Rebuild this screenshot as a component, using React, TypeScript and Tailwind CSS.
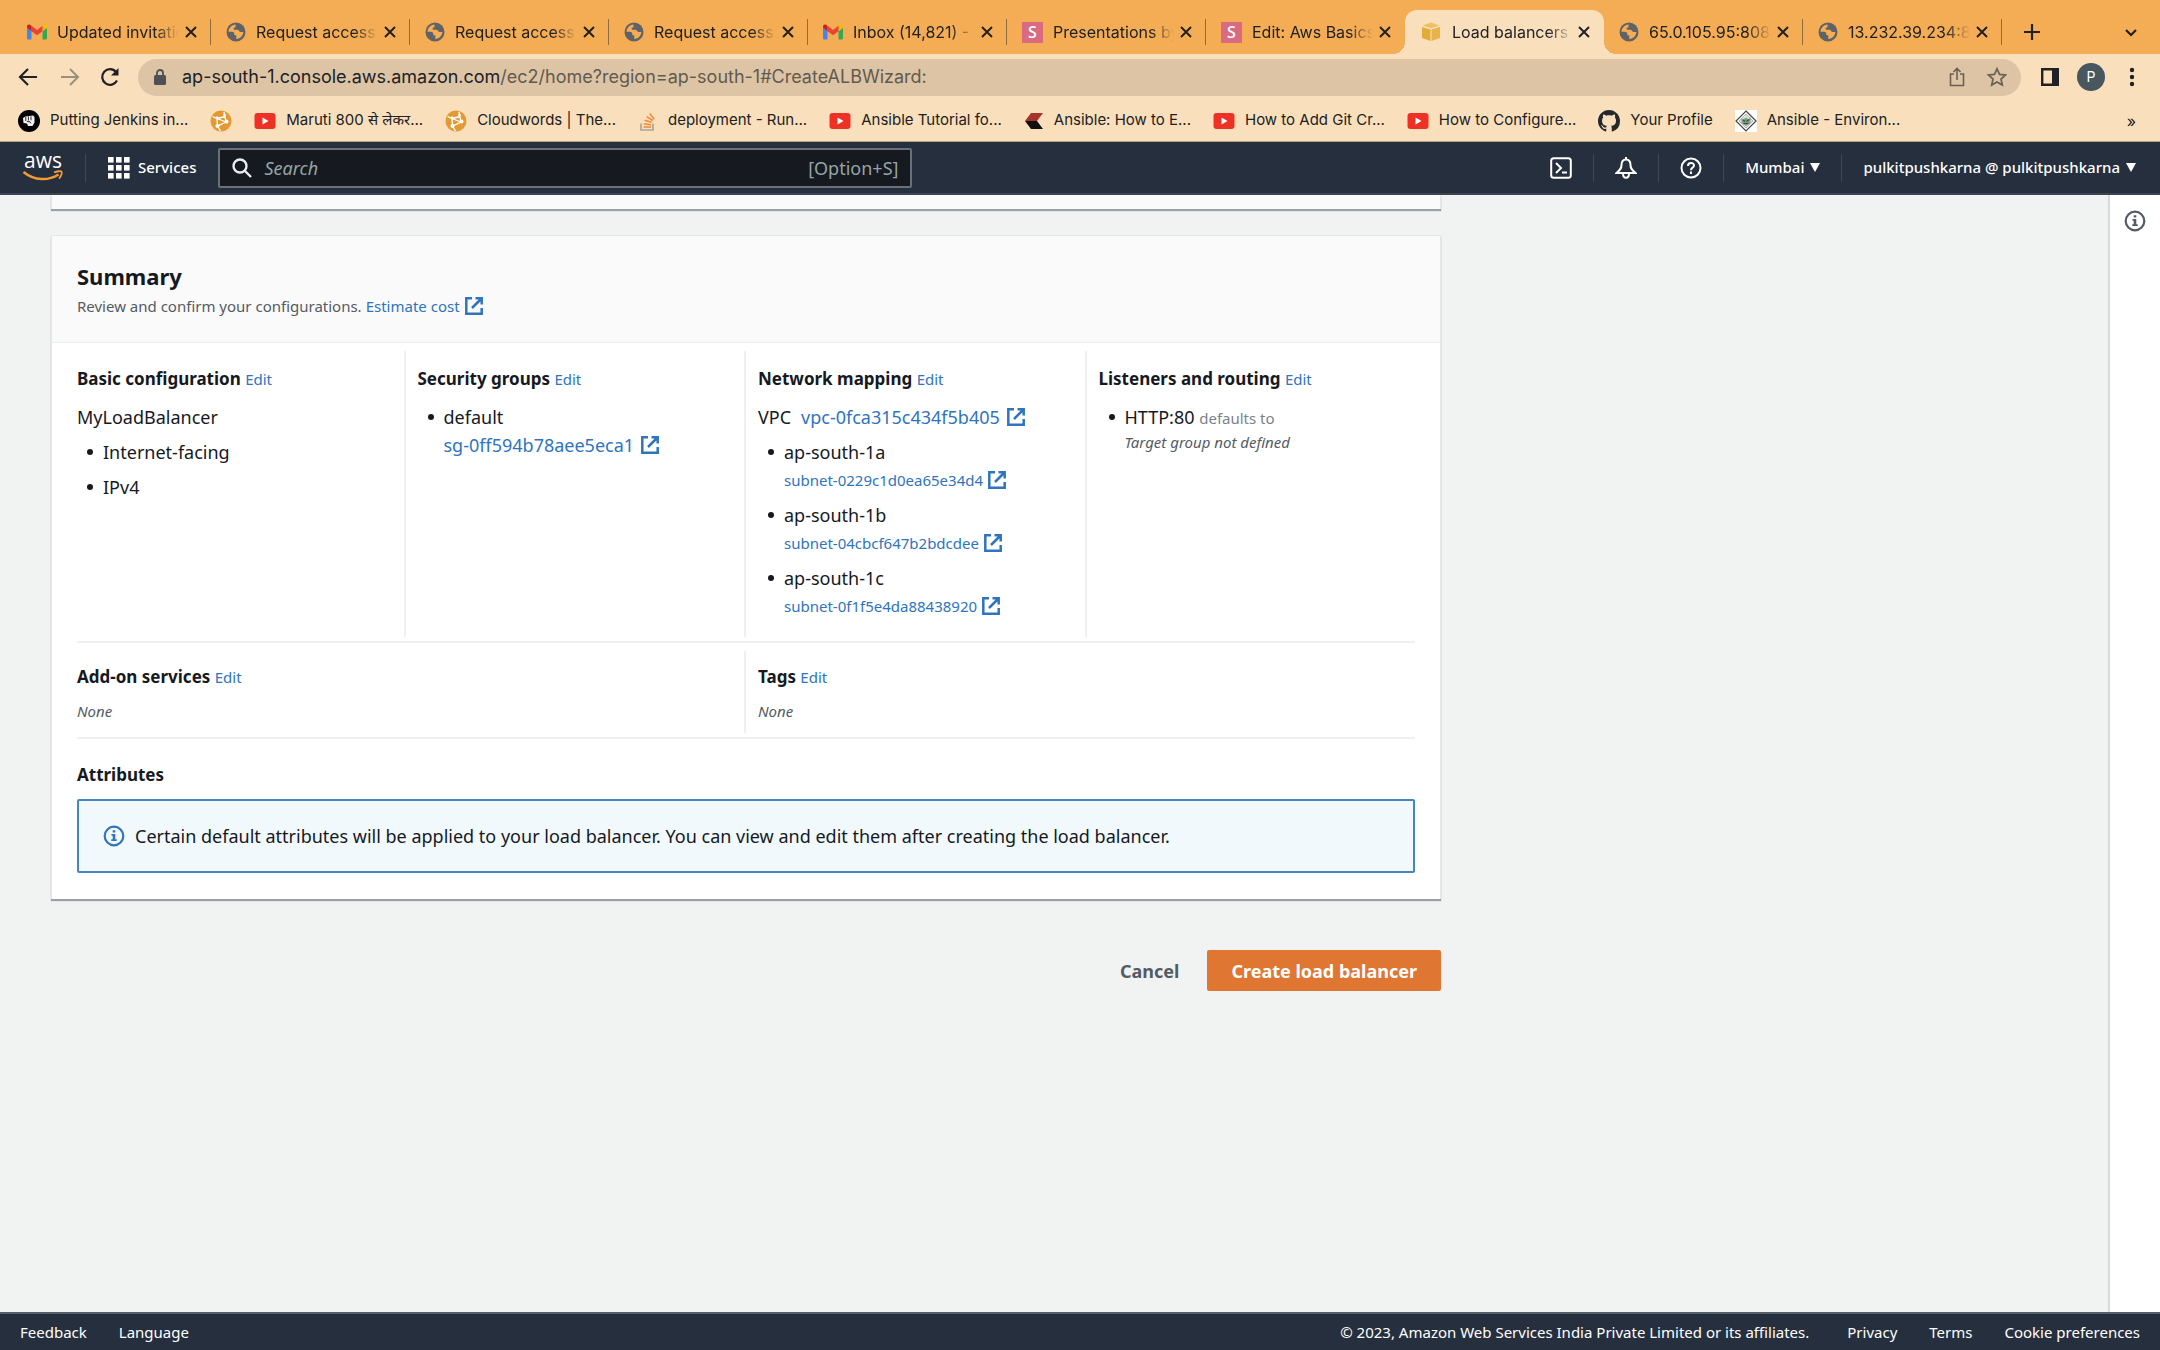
import React from 'react';

interface TabInfo {
  icon: 'gmail' | 'globe' | 'slides' | 'aws';
  title: string;
  active?: boolean;
}

interface BookmarkInfo {
  icon: React.ReactNode;
  title: string;
}

const GmailIcon = () => (
  <svg viewBox="0 0 24 18" className="h-[18px] w-5 shrink-0">
    <path d="M0 3v13.4C0 17.300.7 18 1.600 18H5.400V8L0 4z" fill="#4285f4" />
    <path d="M24 3v13.400c0 .9-.7 1.600-1.600 1.600H18.600V8L24 4z" fill="#34a853" />
    <path d="M18.600 1.600V8L24 4V2.400C24 .3 21.700-.8 20 .5z" fill="#fbbc04" />
    <path d="M5.400 8V1.600L12 6.600l6.600-5V8L12 13z" fill="#ea4335" />
    <path d="M0 2.400V4l5.400 4V1.600L4 .5C2.300-.8 0 .3 0 2.400z" fill="#c5221f" />
  </svg>
);

const GlobeIcon = () => (
  <svg viewBox="0 0 20 20" className="h-5 w-5 shrink-0">
    <circle cx="10" cy="10" r="9.500" fill="#5f6368" />
    <path d="M9.500 2.500C5.500 3 2.700 6 2.500 9.700l3.200.1c2 0 2.600 1 2.600 2.200v1.200h2v3.900c3.900-.4 6.900-3.400 7.100-7.100h-2.900c-1.600 0-1.600-2.200-3.200-2.200H7.800V5.600h1.700z" fill="#f4ad55" />
  </svg>
);

const SlidesIcon = () => (
  <span className="flex h-[21px] w-[21px] shrink-0 items-center justify-center bg-[#d96a80] font-['Open_Sans',sans-serif] text-base font-semibold text-white">
    S
  </span>
);

const CubeIcon = () => (
  <svg viewBox="0 0 22 22" className="h-[22px] w-[22px] shrink-0">
    <path d="M2 6l8.500 2.500V20L2 17z" fill="#e3ab3c" />
    <path d="M20 6l-8.500 2.500V20L20 17z" fill="#e8b347" />
    <path d="M11 1.500l8.500 3L11 7.300l-8.500-2.800z" fill="#edc063" />
  </svg>
);

const YoutubeIcon = () => (
  <svg viewBox="0 0 22 16" className="h-4 w-[22px] shrink-0">
    <rect x=".5" width="21" height="16" rx="3" fill="#ee3124" />
    <path d="M8.500 4.500v7l6-3.500z" fill="#fff" />
  </svg>
);

const CloudwordsIcon = () => (
  <svg viewBox="0 0 22 22" className="h-[22px] w-[22px] shrink-0">
    <circle cx="11" cy="11" r="10.500" fill="#e39a35" />
    <path d="M2.500 6.500L7 8.500 15.500 6.500M7 8.500l9 3.500-8.500 4L7 8.500M16 12l-2-10M7.500 16l3 5" stroke="#fff" strokeWidth="1.300" fill="none" />
    <g fill="#fff">
      <circle cx="7.500" cy="16" r="2" />
      <circle cx="16.500" cy="11.500" r="2" />
      <circle cx="7" cy="8" r="1.400" />
      <circle cx="14.500" cy="5" r="1.300" />
    </g>
  </svg>
);

const FistIcon = () => (
  <svg viewBox="0 0 22 22" className="h-[22px] w-[22px] shrink-0">
    <circle cx="11" cy="11" r="11" fill="#000" />
    <path d="M5 8l2.500-1.500L15 5.500l1.500 1.500v5.500L14.500 16H10l-1-2.500-3.500-.5z" fill="#f2f2f2" />
    <path d="M7.800 7v4M10.400 6.500v4M13 6.300v4M9 11.500l3 .3 1 1.500" stroke="#000" strokeWidth=".8" fill="none" />
  </svg>
);

const StackIcon = () => (
  <svg viewBox="0 0 20 22" className="h-[22px] w-5 shrink-0">
    <path d="M3 13.500v6.500h12v-6.500" fill="none" stroke="#a9a6a0" strokeWidth="1.700" />
    <path d="M5.500 17h7.500M5.700 13.800l7.400.9M6.600 10.300l7 2M8.600 6.700l6.200 3.800M11.700 3.500l4.500 5.700" stroke="#ea8a3c" strokeWidth="1.500" fill="none" />
  </svg>
);

const ChevronMark = () => (
  <svg viewBox="0 0 20 18" className="h-[18px] w-5 shrink-0">
    <path d="M19 1H7L1 9h12z" fill="#a8322c" />
    <path d="M1 9h12l6 8H7z" fill="#111" />
  </svg>
);

const GithubIcon = () => (
  <svg viewBox="0 0 16 16" className="h-[22px] w-[22px] shrink-0" fill="#24292e">
    <path d="M8 0C3.580 0 0 3.580 0 8c0 3.540 2.290 6.530 5.470 7.590.4.070.55-.17.55-.38 0-.19-.01-.82-.01-1.490-2.010.37-2.530-.49-2.690-.94-.09-.23-.48-.94-.82-1.130-.28-.15-.68-.52-.01-.53.63-.01 1.080.58 1.230.82.72 1.210 1.870.87 2.330.66.070-.52.28-.87.51-1.070-1.780-.2-3.640-.89-3.640-3.950 0-.87.31-1.590.82-2.150-.08-.2-.36-1.020.08-2.120 0 0 .67-.21 2.200.82.64-.18 1.320-.27 2-.27s1.360.09 2 .27c1.530-1.040 2.200-.82 2.200-.82.44 1.100.16 1.920.08 2.120.51.56.82 1.270.82 2.150 0 3.070-1.870 3.750-3.650 3.950.29.25.54.73.54 1.480 0 1.070-.01 1.930-.01 2.200 0 .21.15.46.55.38A8.010 8.010 0 0 0 16 8c0-4.420-3.580-8-8-8z" />
  </svg>
);

const DiamondIcon = () => (
  <svg viewBox="0 0 22 22" className="h-[22px] w-[22px] shrink-0">
    <rect width="22" height="22" fill="#fff" />
    <path d="M11 1l10 10-10 10L1 11z" fill="#fff" stroke="#444" strokeWidth="1.200" />
    <path d="M11 4l7 7-7 7-7-7z" fill="#dfe3df" stroke="#888" strokeWidth=".6" />
    <path d="M6.500 8l2 1.200L11 7.500l2.500 1.700L15.500 7v6L11 16l-4.500-3z" fill="#7fa087" />
    <path d="M8 10l2 1.500M14 9.500l-2.500 2M8.500 13.500h5" stroke="#35513c" strokeWidth="1.200" />
  </svg>
);

const ExternalIcon = () => (
  <svg viewBox="0 0 20 20" className="inline-block h-5 w-5 shrink-0" fill="none" stroke="#2f74bd" strokeWidth="2.500">
    <path d="M8 2.300H2.300v15.400h15.400V12" />
    <path d="M11.500 2.300h6.200v6.200M17.500 2.500L8 12" />
  </svg>
);

const InfoIcon = ({ color }: { color: string }) => (
  <svg viewBox="0 0 22 22" className="h-[22px] w-[22px] shrink-0">
    <circle cx="11" cy="11" r="9.300" fill="none" stroke={color} strokeWidth="2.200" />
    <path d="M9.700 5.300h2.600v2.300H9.700zM8.500 9h3.800v5.200h1.400V16H8.300v-1.800h1.400v-3.400H8.500z" fill={color} />
  </svg>
);

const AwsLogo = () => (
  <svg viewBox="0 0 42 28" className="h-7 w-[42px]" role="img" aria-label="aws">
    <text x="20" y="14" textAnchor="middle" fontFamily="Open Sans, sans-serif" fontSize="21" fontWeight="500" fill="#fff">
      aws
    </text>
    <path d="M.5 18c11 9 25 9 35 2.500" fill="none" stroke="#f39b33" strokeWidth="2.500" />
    <path d="M31 18.500c3-1.500 7-1.600 7.600-.8s-.2 4.400-2.600 7" fill="none" stroke="#f39b33" strokeWidth="1.800" />
  </svg>
);

const tabs: TabInfo[] = [
  { icon: 'gmail', title: 'Updated invitation' },
  { icon: 'globe', title: 'Request access' },
  { icon: 'globe', title: 'Request access' },
  { icon: 'globe', title: 'Request access' },
  { icon: 'gmail', title: 'Inbox (14,821) - p' },
  { icon: 'slides', title: 'Presentations by' },
  { icon: 'slides', title: 'Edit: Aws Basics' },
  { icon: 'aws', title: 'Load balancers |', active: true },
  { icon: 'globe', title: '65.0.105.95:8080' },
  { icon: 'globe', title: '13.232.39.234:80' },
];

const bookmarks: BookmarkInfo[] = [
  { icon: <FistIcon />, title: 'Putting Jenkins in...' },
  { icon: <CloudwordsIcon />, title: '' },
  { icon: <YoutubeIcon />, title: 'Maruti 800 से लेकर...' },
  { icon: <CloudwordsIcon />, title: 'Cloudwords | The...' },
  { icon: <StackIcon />, title: 'deployment - Run...' },
  { icon: <YoutubeIcon />, title: 'Ansible Tutorial fo...' },
  { icon: <ChevronMark />, title: 'Ansible: How to E...' },
  { icon: <YoutubeIcon />, title: 'How to Add Git Cr...' },
  { icon: <YoutubeIcon />, title: 'How to Configure...' },
  { icon: <GithubIcon />, title: 'Your Profile' },
  { icon: <DiamondIcon />, title: 'Ansible - Environ...' },
];

const tabIcons = {
  gmail: <GmailIcon />,
  globe: <GlobeIcon />,
  slides: <SlidesIcon />,
  aws: <CubeIcon />,
};

const BrowserTab = ({ tab, divider }: { tab: TabInfo; divider: boolean }) => (
  <div
    className={`relative flex h-11 w-[199px] items-center pr-2 pl-[15px] ${tab.active ? 'rounded-t-xl bg-[#f9dfbb]' : ''}`}
  >
    {tabIcons[tab.icon]}
    <span className="ml-2.5 flex-1 overflow-hidden whitespace-nowrap text-base [mask-image:linear-gradient(to_right,#000_80%,transparent)]">
      {tab.title}
    </span>
    <button aria-label={`Close ${tab.title}`} className="p-1.5">
      <svg viewBox="0 0 12 12" className="h-3 w-3" stroke="#202124" strokeWidth="2">
        <path d="M1 1l10 10M11 1L1 11" />
      </svg>
    </button>
    {divider && <span className="absolute top-[9px] right-0 h-[26px] w-px bg-[#8f6c3f]" />}
    {tab.active && (
      <>
        <span className="absolute bottom-0 -left-3 h-3 w-3 bg-[radial-gradient(circle_at_0_0,#f4ad55_12px,#f9dfbb_12px)]" />
        <span className="absolute -right-3 bottom-0 h-3 w-3 bg-[radial-gradient(circle_at_100%_0,#f4ad55_12px,#f9dfbb_12px)]" />
      </>
    )}
  </div>
);

const BrowserChrome = () => (
  <header className="bg-[#f9dfbb] font-[Inter,'Noto_Sans',sans-serif] text-[#202124]">
    <div className="flex h-[54px] items-end bg-[#f4ad55] pl-3">
      {tabs.map((tab, i) => (
        <BrowserTab key={i} tab={tab} divider={!tab.active && !tabs[i + 1]?.active} />
      ))}
      <button aria-label="New tab" className="mb-3.5 ml-[22px]">
        <svg viewBox="0 0 16 16" className="h-4 w-4" stroke="#202124" strokeWidth="2.200">
          <path d="M8 0v16M0 8h16" />
        </svg>
      </button>
      <button aria-label="Search tabs" className="mr-[22px] mb-3.5 ml-auto">
        <svg viewBox="0 0 14 14" className="h-3.5 w-3.5" fill="none" stroke="#202124" strokeWidth="2.200">
          <path d="M2 4l5 5 5-5" />
        </svg>
      </button>
    </div>

    <div className="flex h-[46px] items-center pr-[25px] pl-[18px]">
      <button aria-label="Back" className="mr-[22px]">
        <svg viewBox="0 0 20 20" className="h-5 w-5" fill="none" stroke="#202124" strokeWidth="2.200">
          <path d="M19 10H3M10 2l-8 8 8 8" />
        </svg>
      </button>
      <button aria-label="Forward" className="mr-5">
        <svg viewBox="0 0 20 20" className="h-5 w-5" fill="none" stroke="#9d8f7b" strokeWidth="2">
          <path d="M1 10h16M10 2l8 8-8 8" />
        </svg>
      </button>
      <button aria-label="Reload" className="mr-[18px]">
        <svg viewBox="0 0 20 20" className="h-5 w-5" fill="none">
          <path d="M17 13.500A7.800 7.800 0 1 1 16 5" stroke="#202124" strokeWidth="2.200" />
          <path d="M18.500 1v7.500H11z" fill="#202124" />
        </svg>
      </button>
      <div className="flex h-[37px] flex-1 items-center rounded-full bg-[#dcc4a5] pr-[14px] pl-4">
        <svg viewBox="0 0 12 16" className="mr-4 h-4 w-3" fill="#4d5156">
          <rect y="6" width="12" height="10" rx="1.500" />
          <path d="M3 7V4a3 3 0 0 1 6 0v3" fill="none" stroke="#4d5156" strokeWidth="1.800" />
        </svg>
        <span className="flex-1 text-lg text-[#202124]">
          ap-south-1.console.aws.amazon.com
          <span className="text-[#635a4f]">/ec2/home?region=ap-south-1#CreateALBWizard:</span>
        </span>
        <button aria-label="Share" className="mr-[22px]">
          <svg viewBox="0 0 16 20" className="h-5 w-4" fill="none" stroke="#6a6154" strokeWidth="1.600">
            <path d="M5 7H1.500v11.500h13V7H11M8 13V1.500M4.500 5L8 1.500 11.500 5" />
          </svg>
        </button>
        <button aria-label="Bookmark this page">
          <svg viewBox="0 0 20 20" className="h-5 w-5" fill="none" stroke="#6a6154" strokeWidth="1.700">
            <path d="M10 1.800l2.500 5.600 6 .6-4.500 4 1.300 6L10 15l-5.300 3L6 12 1.500 8l6-.6z" />
          </svg>
        </button>
      </div>
      <button aria-label="Side panel" className="mr-[18px] ml-5">
        <svg viewBox="0 0 18 18" className="h-[18px] w-[18px]">
          <path d="M1.200 1.200h15.600v15.600H1.200z" fill="none" stroke="#202124" strokeWidth="2.400" />
          <path d="M11 1h6v16h-6z" fill="#202124" />
        </svg>
      </button>
      <button className="flex h-7 w-7 items-center justify-center rounded-full bg-[#47565f] text-sm text-white">P</button>
      <button aria-label="Menu" className="ml-6">
        <svg viewBox="0 0 6 20" className="h-5 w-1.5" fill="#202124">
          <circle cx="3" cy="3" r="2.200" />
          <circle cx="3" cy="10" r="2.200" />
          <circle cx="3" cy="17" r="2.200" />
        </svg>
      </button>
    </div>

    <div className="flex h-[42px] items-center gap-[22px] border-b border-[#b5a284] pr-6 pl-[18px]">
      {bookmarks.map((b, i) => (
        <a key={i} href="#" className="flex items-center gap-2.5 whitespace-nowrap text-[15px]">
          {b.icon}
          {b.title}
        </a>
      ))}
      <button aria-label="More bookmarks" className="ml-auto text-base">»</button>
    </div>
  </header>
);

const AwsHeader = () => (
  <nav className="flex h-[53px] items-center border-b-2 border-[#3b4552] bg-[#262f3e] text-[15px] text-white">
    <a href="#" className="ml-[23px]">
      <AwsLogo />
    </a>
    <span className="mr-[22px] ml-5 h-7 w-px bg-[#3e4855]" />
    <button className="flex items-center gap-2 font-medium">
      <svg viewBox="0 0 22 22" className="h-[22px] w-[22px]" fill="#fff">
        {[0, 8, 16].map((y) => [0, 8, 16].map((x) => <rect key={`${x}-${y}`} x={x} y={y} width="5.600" height="5.600" />))}
      </svg>
      Services
    </button>
    <label className="ml-[22px] flex h-10 w-[694px] items-center rounded-xs border-2 border-[#687078] bg-[#16191f] px-3">
      <svg viewBox="0 0 20 20" className="mr-3 h-5 w-5" fill="none" stroke="#eaeded" strokeWidth="2.400">
        <circle cx="8" cy="8" r="6.500" />
        <path d="M12.500 12.500l6.500 6.500" />
      </svg>
      <input
        type="text"
        aria-label="Search"
        placeholder="Search"
        className="min-w-0 flex-1 bg-transparent text-lg outline-none placeholder:text-[#95a5a6] placeholder:italic"
      />
      <span className="text-lg text-[#95a5a6]">[Option+S]</span>
    </label>
    <div className="ml-auto flex items-center font-medium">
      <button aria-label="CloudShell">
        <svg viewBox="0 0 22 22" className="h-[22px] w-[22px]" fill="none" stroke="#fff" strokeWidth="2">
          <rect x="1.200" y="1.200" width="19.600" height="19.600" rx="2.500" />
          <path d="M6 6l5 5-5 5M12 15.500h5" />
        </svg>
      </button>
      <span className="mx-[21px] h-7 w-px bg-[#3e4855]" />
      <button aria-label="Notifications">
        <svg viewBox="0 0 22 22" className="h-[22px] w-[22px]" fill="none" stroke="#fff" strokeWidth="2">
          <path d="M11 2.500C8 2.500 6.500 5 6.500 8c0 3.500-1.500 5-5 8h19c-3.500-3-5-4.500-5-8 0-3-1.500-5.500-4.500-5.500zM11 0v3M8 16.500c0 2.800 1.300 4.300 3 4.300s3-1.500 3-4.300" />
        </svg>
      </button>
      <span className="mx-[21px] h-7 w-px bg-[#3e4855]" />
      <button aria-label="Help">
        <svg viewBox="0 0 22 22" className="h-[22px] w-[22px]" fill="none" stroke="#fff" strokeWidth="2">
          <circle cx="11" cy="11" r="9.500" />
          <path d="M8 9c0-4 6-4 6-.5 0 2.300-3 2-3 4.700M11 14.500V17" />
        </svg>
      </button>
      <span className="mx-[21px] h-7 w-px bg-[#3e4855]" />
      <button className="flex items-center gap-1.5">
        Mumbai
        <svg viewBox="0 0 10 9" className="h-[9px] w-2.5" fill="#fff">
          <path d="M0 0h10L5 9z" />
        </svg>
      </button>
      <span className="mx-[21px] h-7 w-px bg-[#3e4855]" />
      <button className="mr-6 flex items-center gap-1.5">
        pulkitpushkarna @ pulkitpushkarna
        <svg viewBox="0 0 10 9" className="h-[9px] w-2.5" fill="#fff">
          <path d="M0 0h10L5 9z" />
        </svg>
      </button>
    </div>
  </nav>
);

const SectionTitle = ({ title, edit = true }: { title: string; edit?: boolean }) => (
  <h3 className="text-[17px] leading-7 font-bold">
    {title} {edit && <a href="#" className="text-[15px] font-normal text-[#2f74bd]">Edit</a>}
  </h3>
);

const ExternalLink = ({ label, small }: { label: string; small?: boolean }) => (
  <a href="#" className={`flex items-center text-[#2f74bd] ${small ? 'gap-1 text-[15px]' : 'gap-1.5 text-lg'}`}>
    {label}
    <ExternalIcon />
  </a>
);

const Bullet = ({ children }: { children: React.ReactNode }) => (
  <li className="flex gap-2.5 pl-2.5">
    <span className="mt-[11px] h-1.5 w-1.5 shrink-0 rounded-full bg-[#16191f]" />
    <div>{children}</div>
  </li>
);

const subnets = [
  { zone: 'ap-south-1a', id: 'subnet-0229c1d0ea65e34d4' },
  { zone: 'ap-south-1b', id: 'subnet-04cbcf647b2bdcdee' },
  { zone: 'ap-south-1c', id: 'subnet-0f1f5e4da88438920' },
];

const Summary = () => (
  <section className="border-t border-r border-l border-[#e4e7e8] bg-white shadow-[0_2px_1px_#98a1a6]">
    <div className="border-b border-[#eaeded] bg-[#fafafa] px-[25px] pt-6 pb-[22px]">
      <h2 className="text-[22px] leading-8 font-bold">Summary</h2>
      <p className="flex h-7 items-center gap-1 text-[15px] text-[#545b64]">
        Review and confirm your configurations. <ExternalLink label="Estimate cost" small />
      </p>
    </div>

    <div className="px-[25px] pt-2 pb-[26px]">
      <div className="border-b-2 border-[#eff0f0] pb-1">
        <div className="-mx-3 grid grid-cols-4 text-lg/7">
          <div className="min-h-[286px] border-r-2 border-[#eff0f0] px-3 pt-3.5">
            <SectionTitle title="Basic configuration" />
            <p className="mt-2.5">MyLoadBalancer</p>
            <ul className="mt-[7px] space-y-[7px]">
              <Bullet>Internet-facing</Bullet>
              <Bullet>IPv4</Bullet>
            </ul>
          </div>
          <div className="border-r-2 border-[#eff0f0] px-3 pt-3.5">
            <SectionTitle title="Security groups" />
            <ul className="mt-2.5">
              <Bullet>
                default
                <ExternalLink label="sg-0ff594b78aee5eca1" />
              </Bullet>
            </ul>
          </div>
          <div className="border-r-2 border-[#eff0f0] px-3 pt-3.5">
            <SectionTitle title="Network mapping" />
            <p className="mt-2.5 flex gap-2.5">
              VPC <ExternalLink label="vpc-0fca315c434f5b405" />
            </p>
            <ul className="mt-[7px] space-y-[7px]">
              {subnets.map((s) => (
                <Bullet key={s.id}>
                  {s.zone}
                  <ExternalLink label={s.id} small />
                </Bullet>
              ))}
            </ul>
          </div>
          <div className="px-3 pt-3.5">
            <SectionTitle title="Listeners and routing" />
            <ul className="mt-2.5">
              <Bullet>
                HTTP:80 <span className="text-[15px] text-[#7b8288]">defaults to</span>
                <div className="text-[15px] leading-5 text-[#545b64] italic">Target group not defined</div>
              </Bullet>
            </ul>
          </div>
        </div>
      </div>

      <div className="border-b-2 border-[#eff0f0] pt-2 pb-1">
        <div className="-mx-3 grid grid-cols-2">
          <div className="min-h-[82px] border-r-2 border-[#eff0f0] px-3 pt-3">
            <SectionTitle title="Add-on services" />
            <p className="mt-2 text-[15px] leading-6 text-[#545b64] italic">None</p>
          </div>
          <div className="px-3 pt-3">
            <SectionTitle title="Tags" />
            <p className="mt-2 text-[15px] leading-6 text-[#545b64] italic">None</p>
          </div>
        </div>
      </div>

      <div className="pt-[22px]">
        <SectionTitle title="Attributes" edit={false} />
        <div className="mt-2.5 flex min-h-[74px] items-center gap-2.5 rounded-xs border-2 border-[#4585c5] bg-[#f1f9fd] pl-6 text-lg">
          <InfoIcon color="#2f74bd" />
          Certain default attributes will be applied to your load balancer. You can view and edit them after creating the
          load balancer.
        </div>
      </div>
    </div>
  </section>
);

const Footer = () => (
  <footer className="flex h-[38px] items-center border-t-2 border-[#545d68] bg-[#262f3e] px-5 text-[15px] text-white">
    <a href="#" className="mr-8">Feedback</a>
    <a href="#">Language</a>
    <span className="mr-[38px] ml-auto">© 2023, Amazon Web Services India Private Limited or its affiliates.</span>
    <a href="#" className="mr-8">Privacy</a>
    <a href="#" className="mr-8">Terms</a>
    <a href="#">Cookie preferences</a>
  </footer>
);

export default function App() {
  return (
    <div className="flex min-h-screen flex-col bg-[#f1f3f3] font-['Noto_Sans',sans-serif] text-[#16191f]">
      <BrowserChrome />
      <AwsHeader />
      <div className="flex flex-1">
        <main className="flex-1 pl-[51px]">
          <div className="w-full max-w-[1390px]">
            <div className="mb-[26px] h-3.5 border-x border-[#e4e7e8] bg-[#fafafa] shadow-[0_2px_1px_#98a1a6]" />
            <Summary />
            <div className="mt-[51px] flex justify-end gap-1">
              <button className="h-[41px] px-6 text-lg font-bold text-[#545b64]">Cancel</button>
              <button className="h-[41px] rounded-xs bg-[#df7732] px-6 text-lg font-bold text-white">
                Create load balancer
              </button>
            </div>
          </div>
        </main>
        <aside className="w-[52px] border-l-2 border-[#d5dbdb] bg-white pt-[15px]">
          <button aria-label="Info" className="mx-auto block">
            <InfoIcon color="#545b64" />
          </button>
        </aside>
      </div>
      <Footer />
    </div>
  );
}
